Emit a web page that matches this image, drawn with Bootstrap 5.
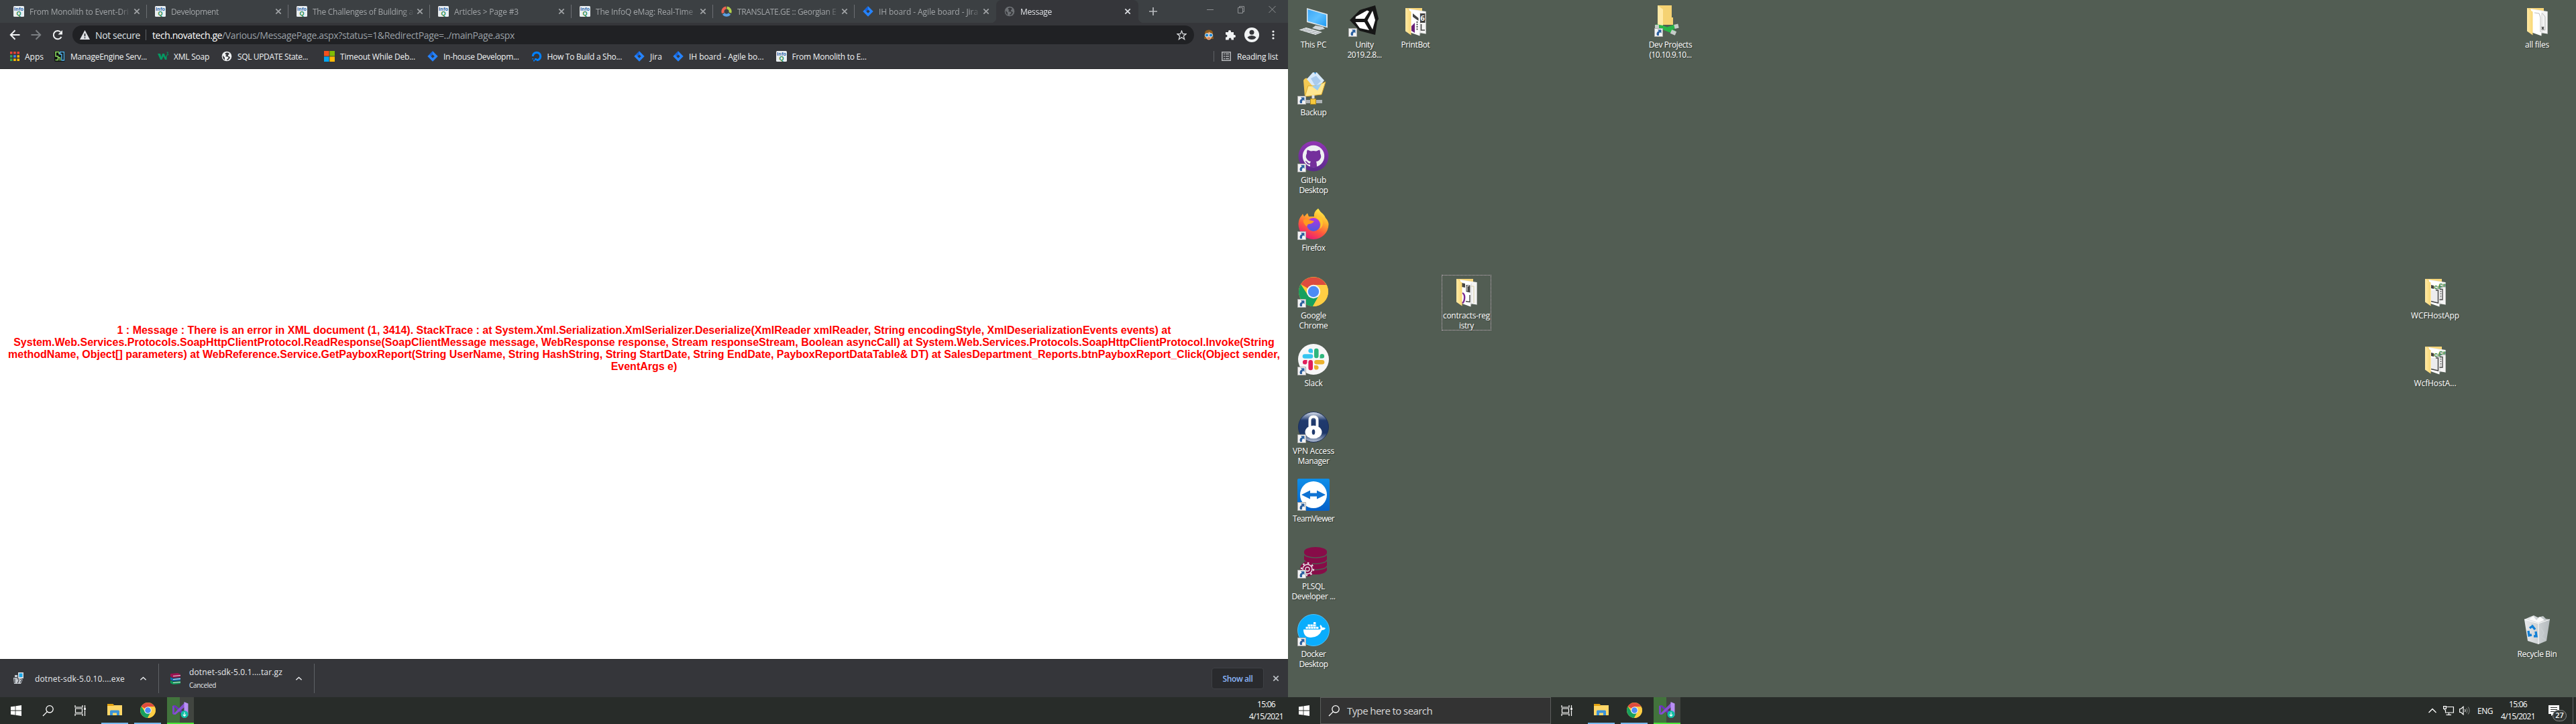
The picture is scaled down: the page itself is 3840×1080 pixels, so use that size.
<!DOCTYPE html>
<html lang="en">
<head>
<meta charset="utf-8">
<title>Message</title>
<link href="https://cdn.jsdelivr.net/npm/bootstrap@5.3.0/dist/css/bootstrap.min.css" rel="stylesheet">
<script src="https://cdn.jsdelivr.net/npm/bootstrap@5.3.0/dist/js/bootstrap.bundle.min.js"></script>
<style>
body{width:3840px;height:1080px;font-family:"Open Sans","Noto Sans",sans-serif;font-size:12px;font-weight:500;line-height:15px;background:#525d53;overflow:hidden}
svg{flex:none;display:block}
.fit{display:inline-block;white-space:pre}
.screen{width:1920px;height:1080px}
.vline{width:1px;background:#5f6266}

/* browser chrome */
.tabstrip{height:34px;background:#3c4043;padding-left:8px;color:#a1a4a7}
.tab-item{width:211px;height:34px;padding-left:12px;position:relative}
.tab-item .tab-title{width:150px;overflow:hidden;white-space:nowrap;margin-left:8px;-webkit-mask-image:linear-gradient(90deg,#000 134px,transparent 152px);mask-image:linear-gradient(90deg,#000 134px,transparent 152px)}
.tab-item.sep::after{content:"";position:absolute;right:0;top:7px;width:1px;height:20px;background:#6c6f73}
.tab-active{background:#35363a;border-radius:8px 8px 0 0;color:#dfe1e5;width:212px}
.tab-active::before,.tab-active::after{content:"";position:absolute;bottom:0;width:8px;height:8px}
.tab-active::before{left:-8px;background:radial-gradient(circle at 0 0,transparent 8px,#35363a 8.5px)}
.tab-active::after{right:-8px;background:radial-gradient(circle at 100% 0,transparent 8px,#35363a 8.5px)}
.newtab{margin-left:15px;height:34px}
.winctl{gap:36px;padding:8px 18px 0 0}
.toolbar{height:36px;background:#35363a;padding-left:13px;padding-top:4px}
.navbtns{gap:14px;height:28px}
.omni{width:1672px;height:28px;border-radius:14px;margin-left:13px;background:#202124;font-size:14px;font-weight:400;color:#9aa0a6;padding-left:11px}
.secure{color:#dfe1e5;margin-left:8px}
.pipe{height:16px;margin:0 9px 0 8px}
.star{margin-right:11px}
.exts{height:28px;margin-left:14px;gap:16px}
.exts svg:nth-child(3){margin-left:-3px}
.exts svg:nth-child(4){margin-left:3px}
.marks{height:33px;background:#35363a;border-bottom:1px solid #28292c;color:#f1f3f4;padding:0 0 4px 15px}
.bm{margin-left:8px;margin-right:18px}
.bm-16{margin-right:16px}
.bm-24{margin-right:24px}
.rsep{height:16px;margin-right:11px}
.rl{margin-left:9px;margin-right:15px}
.page{font:bold 16px/18px "Liberation Sans",Arial,sans-serif;color:#f00}
.err{margin-top:-46px}

/* download shelf */
.shelf{height:57px;background:#35363a;border-top:1px solid #28292c;color:#e8eaed}
.dl1{margin-left:20px}.n1{margin-left:16px}.ca1{margin-left:22px}
.shsep{height:44px;margin-left:17px}
.dl2{margin-left:16px}.n2{margin-left:13px;width:140px;line-height:19px}.cancel{font-size:10px}.ca2{margin-left:18px}
.showall{width:78px;height:32px;border:1px solid #3f4145;border-radius:4px;background:#292a2d;color:#8ab4f8;font-weight:600}
.shx{margin:0 12px;color:#bdc1c6}

/* taskbars */
.taskbar{height:40px;background:#282c29;color:#fff;padding-left:16px}
.task{width:40px;height:40px;margin-right:9px;border-bottom:2px solid #76b9ed}
.task-vs{background:linear-gradient(90deg,#42733c 19px,#414540 19px);border-bottom:2px solid #4ce53a}
.g1{margin-left:31px}.g2{margin-left:30px}.g3{margin-left:22px}
.clock{line-height:18px}.c-left{margin-right:7px}
.searchbox{width:344px;height:40px;background:#333;border:1px solid #5c5e5c;color:#d8d8d8;font-size:15px;font-weight:400;margin-left:16px;padding-left:11px;gap:10px}
.h1x{margin-left:15px}.h2x{margin-left:22px}
.tray{gap:8px}.tray>svg:first-child{margin-right:2px}
.eng{margin-left:2px}.tray .clock{margin:0 12px 0 4px}
.notice{position:relative;width:28px;height:40px}
.notice span{position:absolute;left:6px;top:19px;width:21px;height:17px;border:1px solid #8b8e8b;border-radius:9px;background:#333735;font-size:11px;font-weight:600;line-height:14px;text-align:center}
.edge{height:40px;margin-right:4px}

/* desktop icon grid */
.desk{height:1040px;background:#525d53;display:grid;grid-template-columns:repeat(25,76px);grid-template-rows:repeat(10,101px);color:#fff;text-align:center;text-shadow:1px 1px 1px #0006}
.shortcut{padding-top:7px;position:relative}
.shortcut svg{margin:0 auto 4px}
.shortcut.picked::after{content:"";position:absolute;left:1px;top:6px;width:74px;height:83px;border:1px dotted #c9b5c3}
.r0{grid-row:1}.r1{grid-row:2}.r2{grid-row:3}.r3{grid-row:4}.r4{grid-row:5}.r5{grid-row:6}.r6{grid-row:7}.r7{grid-row:8}.r8{grid-row:9}.r9{grid-row:10}
.c0{grid-column:1}.c1{grid-column:2}.c2{grid-column:3}.c3{grid-column:4}.c7{grid-column:8}.c22{grid-column:23}.c24{grid-column:25}
</style>
</head>
<body class="d-flex m-0">
<svg width="0" height="0" class="position-absolute">
<defs>
<linearGradient id="gFolder" x1="0" x2="1"><stop offset="0" stop-color="#ffe9a6"/><stop offset="1" stop-color="#f9d773"/></linearGradient>
<linearGradient id="gScreen" x1="0" y1="0" x2="1" y2="1"><stop offset="0" stop-color="#3aa5f5"/><stop offset=".5" stop-color="#5fc0ff"/><stop offset="1" stop-color="#1f9bf2"/></linearGradient>
<linearGradient id="gGit" x1="0" y1="0" x2="0" y2="1"><stop offset="0" stop-color="#9135b4"/><stop offset="1" stop-color="#5b2a8c"/></linearGradient>
<linearGradient id="gFox" x1=".8" y1="0" x2=".3" y2="1"><stop offset="0" stop-color="#fff44f"/><stop offset=".35" stop-color="#ffb02e"/><stop offset=".65" stop-color="#ff5a3c"/><stop offset="1" stop-color="#e6127d"/></linearGradient>
<linearGradient id="gGlobe" x1="0" y1="0" x2="0" y2="1"><stop offset="0" stop-color="#b833e1"/><stop offset="1" stop-color="#4a5ae0"/></linearGradient>
<linearGradient id="gTv" x1="0" y1="0" x2="0" y2="1"><stop offset="0" stop-color="#0e8ee9"/><stop offset="1" stop-color="#0560c8"/></linearGradient>
<linearGradient id="gVpn" x1="0" y1="0" x2="0" y2="1"><stop offset="0" stop-color="#dfe6f2"/><stop offset=".28" stop-color="#203a6e"/><stop offset=".7" stop-color="#1e3768"/><stop offset="1" stop-color="#b9c5da"/></linearGradient>
<linearGradient id="gBin" x1="0" x2="1"><stop offset="0" stop-color="#e9ebed"/><stop offset="1" stop-color="#b4babd"/></linearGradient>
<symbol id="infoq" viewBox="0 0 16 16"><rect width="16" height="16" rx="1.5" fill="#e9eef1"/><text x="8" y="6.8" font-family="Liberation Sans" font-weight="bold" font-size="7.2" text-anchor="middle" fill="#1d5fa8" textLength="14">Info</text><text x="8" y="14" font-family="Liberation Sans" font-weight="bold" font-size="9" text-anchor="middle" fill="#1f8a4c">Q</text></symbol>
<symbol id="jira" viewBox="0 0 16 16"><path d="M8 .3 15.7 8 8 15.7.3 8Z" fill="#2684ff"/><path d="M8 5.2 10.8 8 8 10.8 5.2 8Z" fill="#333c4c"/><path d="M8 .3V5.2L5.2 8 3 5.4Z" fill="#1563db"/></symbol>
<symbol id="translate" viewBox="0 0 16 16" fill="none" stroke-width="4"><path d="M7.5 2.4A5.7 5.7 0 0 0 3 10.5" stroke="#ee6352"/><path d="M8.5 2.4A5.7 5.7 0 0 1 13.3 10" stroke="#b2cf4c"/><path d="M3.5 11.5A5.7 5.7 0 0 0 12.6 11.5" stroke="#5c9fe0"/></symbol>
<symbol id="globe" viewBox="0 0 16 16"><circle cx="8" cy="8" r="7.3" fill="currentColor"/><path d="M8.5 2.5C5 2.500 5 5 7 5.500S5 7 6.500 8s4 0 4 2-2.500 1.500-2.500 4c3.500-.5 4.500-3 5-5l-2.500-1C9 7.500 10.500 5 12 4.500 11 3 10 2.500 8.500 2.500ZM2.300 6.500c1 3 3 2 2.700 4-.2 1.500 0 2 .5 3C3 12.500 1.500 9.500 2.300 6.500Z" fill="#35363a"/></symbol>
<symbol id="xmark" viewBox="0 0 12 12"><path d="M2.3 2.3 9.700 9.700M9.700 2.300 2.300 9.700" stroke="currentColor" stroke-width="1.7"/></symbol>
<symbol id="caret" viewBox="0 0 12 12"><path d="M1.500 8 6 3.700 10.500 8" stroke="currentColor" fill="none" stroke-width="1.6"/></symbol>
<symbol id="win" viewBox="0 0 16 16" fill="#fff"><path d="M0 2.300 6.600 1.400V7.600H0ZM7.400 1.300 16 0V7.600H7.400ZM0 8.400H6.600V14.600L0 13.700ZM7.400 8.400H16V16L7.400 14.700Z"/></symbol>
<symbol id="lens" viewBox="0 0 18 18" fill="none" stroke="#fff" stroke-width="1.3"><circle cx="11" cy="6.800" r="5.200"/><path d="M7.300 10.600 1 17"/></symbol>
<symbol id="tview" viewBox="0 0 18 18" fill="none" stroke="#fff" stroke-width="1.2"><path d="M1 1v3h11V1M1 17v-3h11v3M1.500 6h10v6h-10ZM15.500 1v4M15.500 8.500V17"/><path d="M14.200 5h2.600v3h-2.600z" fill="#fff" stroke="none"/></symbol>
<symbol id="explorer" viewBox="0 0 22 20"><path d="M0 1H8L10 3H22V18H0Z" fill="#ffd768"/><path d="M0 1H8L10 3V4H0Z" fill="#e2a210"/><path d="M4 18V12Q4 10.500 5.500 10.500H16.500Q18 10.500 18 12V18H14V14.500H8V18Z" fill="#3b93d9"/></symbol>
<symbol id="chrome" viewBox="0 0 48 48"><circle cx="24" cy="24" r="22" fill="#fc3"/><path d="M24 24 5 13A22 22 0 0 1 43.200 14H24Z" fill="#dd4b3e"/><path d="M5 13A22 22 0 0 0 23 46L32.500 29.500 24 24 15.500 29Z" fill="#17a05e"/><path d="M24 14H43.500A22 22 0 0 1 23 46L33 28Z" fill="#ffce44"/><circle cx="24" cy="24" r="10.200" fill="#f5f5f5"/><circle cx="24" cy="24" r="8.200" fill="#4c8bf5"/></symbol>
<symbol id="vs" viewBox="0 0 24 24"><path d="M0 6 3 5V19L0 18Z" fill="#7a45c8"/><path d="M1 5.500 4.500 5 18.500 16.500V23Z" fill="#6a35b5"/><path d="M1 18.500 4.500 19 18.500 7.500V1Z" fill="#8650d0"/><path d="M17.500 0 23.500 2.500V20.500L17.500 23Z" fill="#b98ff4"/><circle cx="18" cy="18.500" r="5.500" fill="#12bfa6"/><path d="M18 15.500V21M15.800 19 18 21.200 20.200 19" stroke="#fff" fill="none" stroke-width="1.1"/></symbol>
<symbol id="link" viewBox="0 0 13 13"><path d="M.5.5h12v12H.5z" fill="#f3f3f3" stroke="#a9a9a9"/><path d="M5 2.200H10.500V7.700L8.800 6.100C6.800 7.400 6.500 9 7.200 11H4.200C2.700 8 4 5.300 6.800 4.200Z" fill="#2b5f9e"/></symbol>
<symbol id="folderdoc" viewBox="0 0 48 48"><path d="M9 5H34V40H17Z" fill="#f6d579"/><path d="M14 6 36 9.500 39.500 10V43.500L30 42Z" fill="#f3f3f3"/><path d="M15 7 30.500 10V46.500L15 41Z" fill="#fff"/><path d="M31 12V44M39.500 10V43.500" stroke="#c8c8c8" stroke-width=".7"/></symbol>
<symbol id="folderfront" viewBox="0 0 48 48"><path d="M9 5 17.500 10.500V45.500L9 39.500Z" fill="url(#gFolder)"/></symbol>
<symbol id="codedocs" viewBox="0 0 48 48"><use href="#folderdoc"/><path d="M18 22V39L28.500 42V21" fill="#ececee"/><path d="M18 14 22 15V20L18 19Z" fill="#444"/><path d="M18 38.500 28.500 41V22H25" fill="none" stroke="#444" stroke-width="1.5"/><path d="M31 20.500H35V36H30.500" fill="none" stroke="#444" stroke-width="1.300"/><path d="M32.500 23V34" stroke="#555" stroke-width="1.500" stroke-dasharray="1.500 2"/><text x="22" y="19.500" font-family="Liberation Sans" font-size="8" font-weight="bold" fill="#2b8a30">C#</text><text x="29.500" y="17" font-family="Liberation Sans" font-size="8" font-weight="bold" fill="#2b8a30">C#</text><use href="#folderfront"/></symbol>
</defs>
</svg>

<!-- Left monitor: browser window -->
<div class="screen d-flex flex-column">
  <div class="tabstrip d-flex">
    <div class="tab-item sep d-flex align-items-center"><svg width="16" height="16"><use href="#infoq"/></svg><div class="tab-title"><span class="fit" data-w="147.5">From Monolith to Event-Dri</span></div><svg width="12" height="12" class="ms-1"><use href="#xmark"/></svg></div>
    <div class="tab-item sep d-flex align-items-center"><svg width="16" height="16"><use href="#infoq"/></svg><div class="tab-title"><span class="fit" data-w="71">Development</span></div><svg width="12" height="12" class="ms-1"><use href="#xmark"/></svg></div>
    <div class="tab-item sep d-flex align-items-center"><svg width="16" height="16"><use href="#infoq"/></svg><div class="tab-title"><span class="fit" data-w="150">The Challenges of Building a</span></div><svg width="12" height="12" class="ms-1"><use href="#xmark"/></svg></div>
    <div class="tab-item sep d-flex align-items-center"><svg width="16" height="16"><use href="#infoq"/></svg><div class="tab-title"><span class="fit" data-w="96">Articles &gt; Page #3</span></div><svg width="12" height="12" class="ms-1"><use href="#xmark"/></svg></div>
    <div class="tab-item sep d-flex align-items-center"><svg width="16" height="16"><use href="#infoq"/></svg><div class="tab-title"><span class="fit" data-w="145">The InfoQ eMag: Real-Time</span></div><svg width="12" height="12" class="ms-1"><use href="#xmark"/></svg></div>
    <div class="tab-item sep d-flex align-items-center"><svg width="16" height="16"><use href="#translate"/></svg><div class="tab-title"><span class="fit" data-w="147.5">TRANSLATE.GE :: Georgian E</span></div><svg width="12" height="12" class="ms-1"><use href="#xmark"/></svg></div>
    <div class="tab-item d-flex align-items-center"><svg width="16" height="16"><use href="#jira"/></svg><div class="tab-title"><span class="fit" data-w="148">IH board - Agile board - Jira</span></div><svg width="12" height="12" class="ms-1"><use href="#xmark"/></svg></div>
    <div class="tab-item tab-active d-flex align-items-center"><svg width="16" height="16" color="#6d7074"><use href="#globe"/></svg><div class="tab-title"><span class="fit" data-w="47">Message</span></div><svg width="12" height="12" class="ms-1"><use href="#xmark"/></svg></div>
    <div class="newtab d-flex align-items-center"><svg width="14" height="14" viewBox="0 0 14 14"><path d="M7 1V13M1 7H13" stroke="#b9bcc0" stroke-width="1.7"/></svg></div>
    <div class="winctl d-flex align-items-start ms-auto">
      <svg width="10" height="12" viewBox="0 0 10 12"><path d="M0 6.500H10" stroke="#8f9295"/></svg>
      <svg width="10" height="12" viewBox="0 0 10 12" fill="none" stroke="#8f9295"><path d="M.5 3.500h7v8h-7zM2.500 3.500v-2h7v8h-2"/></svg>
      <svg width="11" height="12" viewBox="0 0 11 12"><path d="M.5 1 10.500 11M10.500 1 .5 11" stroke="#8f9295"/></svg>
    </div>
  </div>
  <div class="toolbar d-flex align-items-start">
    <div class="navbtns d-flex align-items-center">
      <svg width="18" height="18" viewBox="0 0 18 18" fill="none" stroke="#f1f3f4" stroke-width="2"><path d="M16.500 9H3M9.500 2.300 2.800 9 9.500 15.700"/></svg>
      <svg width="18" height="18" viewBox="0 0 18 18" fill="none" stroke="#7b7e82" stroke-width="2"><path d="M1.500 9H15M8.500 2.300 15.200 9 8.500 15.700"/></svg>
      <svg width="18" height="18" viewBox="0 0 18 18"><path d="M14.500 12A6.200 6.200 0 1 1 13.200 4.600" fill="none" stroke="#f1f3f4" stroke-width="2"/><path d="M16 2V8.500H9.500Z" fill="#f1f3f4"/></svg>
    </div>
    <div class="omni d-flex align-items-center">
      <svg width="15" height="14" viewBox="0 0 15 14"><path d="M7.500 0 15 14H0Z" fill="#dfe1e5"/><path d="M7.500 5V9.300M7.500 10.500V12.300" stroke="#202124" stroke-width="1.6"/></svg>
      <span class="fit secure" data-w="67">Not secure</span><span class="vline pipe"></span>
      <span class="fit text-white" data-w="104">tech.novatech.ge</span><span class="fit" data-w="436">/Various/MessagePage.aspx?status=1&amp;RedirectPage=../mainPage.aspx</span>
      <svg class="ms-auto star" width="15" height="15" viewBox="0 0 16 16"><path d="M8 1.200 9.900 6H15L11 9.200 12.400 14.500 8 11.500 3.600 14.500 5 9.200 1 6H6.100Z" fill="none" stroke="#d6d8db" stroke-width="1.4"/></svg>
    </div>
    <div class="exts d-flex align-items-center">
      <svg width="16" height="16" viewBox="0 0 16 16"><path d="M2 7Q1 1 8 0.500 15 1 14 7L15 14H1Z" fill="#8f5c1e"/><path d="M3.500 6Q6 6 9 3.500 10 6 12.500 6V11Q11 15.500 8 15.500 5 15.500 3.500 11Z" fill="#eeb080"/><circle cx="5" cy="8.500" r="2.600" fill="#1d84d0" stroke="#d8ecfa"/><circle cx="11" cy="8.500" r="2.600" fill="#1d84d0" stroke="#d8ecfa"/><path d="M6 13h4" stroke="#b0543a"/></svg>
      <svg width="16" height="16" viewBox="0 0 16 16"><path d="M1 4H5V3A2 2 0 0 1 9 3V4H13V8H14A2 2 0 0 1 14 12H13V15.500H9.500V14.500A1.900 1.900 0 0 0 5.700 14.500V15.500H1V11.500H2A1.900 1.900 0 0 0 2 7.800H1Z" fill="#f1f3f4"/></svg>
      <svg width="22" height="22" viewBox="0 0 22 22"><circle cx="11" cy="11" r="11" fill="#f1f3f4"/><circle cx="11" cy="7.200" r="3.500" fill="#35363a"/><path d="M4.500 14.500Q7 12 11 12T17.500 14.500Q15.500 18 11 18T4.500 14.500Z" fill="#35363a"/></svg>
      <svg width="4" height="14" viewBox="0 0 4 14" fill="#f1f3f4"><circle cx="2" cy="2" r="1.600"/><circle cx="2" cy="7" r="1.600"/><circle cx="2" cy="12" r="1.600"/></svg>
    </div>
  </div>
  <div class="marks d-flex align-items-center">
    <svg width="14" height="14" viewBox="0 0 14 14"><path d="M0 0h3.500v3.500H0zM5.200 0h3.500v3.500H5.200zM10.500 0H14v3.500h-3.500z" fill="#ea4335"/><path d="M0 5.200h3.500v3.500H0zM0 10.500h3.500V14H0z" fill="#34a853"/><path d="M5.200 5.200h3.500v3.500H5.200z" fill="#4285f4"/><path d="M10.500 5.200H14v3.500h-3.500zM5.200 10.500h3.500V14H5.200zM10.500 10.500H14V14h-3.500z" fill="#fbbc05"/></svg>
    <span class="fit bm bm-16" data-w="28">Apps</span>
    <svg width="16" height="16" viewBox="0 0 16 16"><rect width="16" height="16" rx="2" fill="#101312"/><path d="M7 1.500H2V8H5.500V13.500H1.500M8.500 14.500V10H5M7 1.500V5" fill="none" stroke="#8ee05f" stroke-width="1.5"/><path d="M8.500 1.500H14.500V14H11V5H8.500Z" fill="none" stroke="#56b4ea" stroke-width="1.5"/></svg>
    <span class="fit bm bm-16" data-w="114">ManageEngine Serv...</span>
    <svg width="16" height="16" viewBox="0 0 16 16"><path d="M0 4H4L5.500 9 7 4H10L11.500 9 13.500 5 13.500 13H11L8.500 8 6.500 13H4Z" fill="#059862"/><path d="M13.500 2H15.500L14.500 4Q16 4 15.500 6H13.500" fill="none" stroke="#059862"/></svg>
    <span class="fit bm" data-w="53">XML Soap</span>
    <svg width="16" height="16" color="#f1f3f4"><use href="#globe"/></svg>
    <span class="fit bm bm-24" data-w="105">SQL UPDATE State...</span>
    <svg width="16" height="16" viewBox="0 0 16 16"><path d="M0 0h7.600v7.600H0z" fill="#f4511e"/><path d="M8.400 0H16v7.600H8.400z" fill="#81bc06"/><path d="M0 8.400h7.600V16H0z" fill="#05a6f0"/><path d="M8.400 8.400H16V16H8.400z" fill="#ffba08"/></svg>
    <span class="fit bm" data-w="112">Timeout While Deb...</span>
    <svg width="16" height="16"><use href="#jira"/></svg><span class="fit bm" data-w="112.5">In-house Developm...</span>
    <svg width="16" height="16" viewBox="0 0 16 16"><path d="M8 13.700A5.700 5.700 0 1 0 2.300 8" fill="none" stroke="#0080ff" stroke-width="3.2"/><path d="M5 11h3v3H5zM3 13.500h2v2H3zM1.500 11h1.600v1.600H1.500z" fill="#0080ff"/></svg><span class="fit bm" data-w="111.5">How To Build a Sho...</span>
    <svg width="16" height="16"><use href="#jira"/></svg><span class="fit bm bm-16" data-w="18">Jira</span>
    <svg width="16" height="16"><use href="#jira"/></svg><span class="fit bm" data-w="111.500">IH board - Agile bo...</span>
    <svg width="16" height="16"><use href="#infoq"/></svg><span class="fit bm" data-w="111">From Monolith to E...</span>
    <span class="vline rsep ms-auto"></span>
    <svg width="14" height="14" viewBox="0 0 14 14"><path d="M.8.800h12.400v12.400H.8z" fill="none" stroke="#b5b7ba" stroke-width="1.5"/><path d="M3 3.500h2M6 3.500h5M3 7h2M6 7h5M3 10.500h2M6 10.500h5" stroke="#b5b7ba" stroke-width="1.5"/></svg>
    <span class="fit rl" data-w="61">Reading list</span>
  </div>
  <main class="page flex-fill bg-white d-flex flex-column justify-content-center text-center">
    <div class="err">1 : Message : There is an error in XML document (1, 3414). StackTrace : at System.Xml.Serialization.XmlSerializer.Deserialize(XmlReader xmlReader, String encodingStyle, XmlDeserializationEvents events) at<br>System.Web.Services.Protocols.SoapHttpClientProtocol.ReadResponse(SoapClientMessage message, WebResponse response, Stream responseStream, Boolean asyncCall) at System.Web.Services.Protocols.SoapHttpClientProtocol.Invoke(String<br>methodName, Object[] parameters) at WebReference.Service.GetPayboxReport(String UserName, String HashString, String StartDate, String EndDate, PayboxReportDataTable&amp; DT) at SalesDepartment_Reports.btnPayboxReport_Click(Object sender,<br>EventArgs e)</div>
  </main>
  <div class="shelf d-flex align-items-center">
    <svg class="dl1" width="16" height="18" viewBox="0 0 16 18"><path d="M7 0h8v9H7z" fill="#d9dde3"/><path d="M8.500 1.500h5V7h-5z" fill="#19a7e8"/><path d="M2 4h4v3H2zM0 8h10l4 3-3 6H1Z" fill="#c9cdd2"/><path d="M2 9v7M5 10q3-2 3 1t-2 5M10 10l3 2-3 3" stroke="#4a4e55" fill="none" stroke-width="1.3"/></svg>
    <span class="fit n1" data-w="134">dotnet-sdk-5.0.10....exe</span>
    <svg class="ca1" width="11" height="11"><use href="#caret"/></svg>
    <span class="vline shsep"></span>
    <svg class="dl2" width="16" height="17" viewBox="0 0 16 17"><path d="M1 1 12 0 16 2V6L5 7 1 5Z" fill="#9c1150"/><path d="M1 6 5 8 16 7V11L5 12 1 10Z" fill="#1569b0"/><path d="M1 11 5 13 16 12V16L5 17 1 15Z" fill="#0d9a59"/><path d="M5 4.500 16 3.500M5 9.500 16 8.500M5 14.500 16 13.500" stroke="#e7e9ea"/></svg>
    <div class="n2"><span class="fit d-block" data-w="139">dotnet-sdk-5.0.1....tar.gz</span><span class="fit cancel" data-w="40">Canceled</span></div>
    <svg class="ca2" width="11" height="11"><use href="#caret"/></svg>
    <span class="vline shsep"></span>
    <div class="showall ms-auto d-flex align-items-center justify-content-center"><span class="fit" data-w="45">Show all</span></div>
    <svg class="shx" width="12" height="12"><use href="#xmark"/></svg>
  </div>
  <div class="taskbar d-flex align-items-center">
    <svg width="16" height="16"><use href="#win"/></svg>
    <svg width="18" height="18" class="g1"><use href="#lens"/></svg>
    <svg width="18" height="18" class="g2"><use href="#tview"/></svg>
    <div class="task d-flex align-items-center justify-content-center g3"><svg width="22" height="20"><use href="#explorer"/></svg></div>
    <div class="task d-flex align-items-center justify-content-center"><svg width="25" height="25"><use href="#chrome"/></svg></div>
    <div class="task task-vs d-flex align-items-center justify-content-center"><svg width="24" height="24"><use href="#vs"/></svg></div>
    <div class="ms-auto text-center clock c-left"><span class="fit" data-w="27">15:06</span><br><span class="fit" data-w="51">4/15/2021</span></div>
  </div>
</div>

<!-- Right monitor: desktop -->
<div class="screen d-flex flex-column">
  <div class="desk">
    <div class="shortcut r0 c0"><svg width="48" height="48" viewBox="0 0 48 48"><path d="M14 5 45 14V34.500L14 26Z" fill="#dfe6ea"/><path d="M15.500 7 43 15V32.500L15.500 24.500Z" fill="url(#gScreen)"/><path d="M27 31 38 33 41 36 33 38 22 35Z" fill="#cfd6da"/><path d="M2.500 37.500 13 34 37 41 27 45Z" fill="#e8ecee"/><path d="M7 38.500 16 36M12 40 22 37.500M18 42 28 39.500M24 43.500 33 41M6 36.500 30 43.500M10 35.500 34 42" stroke="#9da4a8" stroke-width=".7"/></svg><span class="fit" data-w="38.5">This PC</span></div>
    <div class="shortcut r0 c1"><svg width="48" height="48" viewBox="0 0 48 48"><path d="M2 23 17 8 40 1 45 21 43 25 40 45 17 39Z" fill="#161616"/><path d="M11 18 28 8.500 31 10 24 21H10.500ZM10.500 26H24L31 38 17 35ZM36 9 40 23 36 37 28.500 23.500Z" fill="#fff"/><use href="#link" x="0" y="35" width="13" height="13"/></svg><span class="fit" data-w="27">Unity</span><br><span class="fit" data-w="51">2019.2.8...</span></div>
    <div class="shortcut r0 c2"><svg width="48" height="48" viewBox="0 0 48 48"><use href="#folderdoc"/><path d="M31 13H38.500V27H31Z" fill="#444"/><path d="M32.500 29V38H38" fill="none" stroke="#444" stroke-width="1.600"/><path d="M20 13 28.500 20V24L24 21 20 18Z" fill="#444"/><path d="M26.500 25V38" stroke="#444" stroke-width="2" stroke-dasharray="2 1.500"/><text x="31.500" y="24" font-size="11" fill="#fff" font-weight="bold">6</text><path d="M18 32 23 27V42L18 39Z" fill="#68217a"/><use href="#folderfront"/></svg><span class="fit" data-w="43">PrintBot</span></div>
    <div class="shortcut r0 c7"><svg width="48" height="48" viewBox="0 0 48 48"><path d="M5 1H26V19H28V30H10Z" fill="#f5d273"/><path d="M5 1 13 7V33L5 30Z" fill="#ffe9a6"/><path d="M2 32 12 34 20 37 30 41M18 37 32 32" stroke="#2ab548" stroke-width="6" fill="none"/><path d="M1 33H7M30 33 36 31.500M25 40 32 43" stroke="#c5cbc8" stroke-width="6"/><use href="#link" x="0" y="35" width="13" height="13"/></svg><span class="fit" data-w="64.5">Dev Projects</span><br><span class="fit" data-w="63">(10.10.9.10...</span></div>
    <div class="shortcut r0 c24"><svg width="48" height="48" viewBox="0 0 48 48"><use href="#folderdoc"/><path d="M32 13 36 18V38H31M20 12 27 13 29 19V41" fill="none" stroke="#bbb"/><path d="M31 33l3 4m0-4-3 4" stroke="#444" stroke-width="1.3"/><use href="#folderfront"/></svg><span class="fit" data-w="36">all files</span></div>
    <div class="shortcut r1 c0"><svg width="48" height="48" viewBox="0 0 48 48"><path d="M9 12Q12 6 17 10L24 14 40 16 36 33 11 36Z" fill="#f4c953"/><path d="M14 10 23 0H29L40 12 28 27Z" fill="#d7e9fa"/><path d="M20 9 28 5 35 13 27 21Z" fill="#a9cbee"/><path d="M25 0H28L26.500 3Z" fill="#2d8ee0"/><path d="M11 36 16 20 30 20 42 14 36 33Z" fill="#ffe68f" stroke="#d9a92e"/><path d="M22 21 36 17 30 27Z" fill="#9cccf0"/><path d="M23.500 34V43" stroke="#ddd" stroke-width="4"/><path d="M11 43.500H37" stroke="#aeb3b5" stroke-width="5"/><path d="M19.500 39.500h8v8h-8z" fill="#f7c93c" stroke="#b1881c"/><use href="#link" x="0" y="35" width="13" height="13"/></svg><span class="fit" data-w="39">Backup</span></div>
    <div class="shortcut r2 c0"><svg width="48" height="48" viewBox="0 0 48 48"><circle cx="24" cy="24" r="22.500" fill="url(#gGit)"/><circle cx="24" cy="24" r="16.200" fill="#eef0f2"/><path d="M15 14.500 20 16.500Q24 15.500 28 16.500L33 14.500Q34.500 17 34 20 37 25 33 29.500 31 31.500 28 32 29 34 29 40.500H19V36.500Q15 37 13.500 34 12.500 32 11.500 31 14 30.500 15.500 33.500 17 35.500 19 34.500 19 33 20 32 17 31.500 15 29.500 11 25 14 20 13.500 17 15 14.500Z" fill="#74309c"/><use href="#link" x="0" y="35" width="13" height="13"/></svg><span class="fit" data-w="38">GitHub</span><br><span class="fit" data-w="43">Desktop</span></div>
    <div class="shortcut r3 c0"><svg width="48" height="48" viewBox="0 0 48 48"><path d="M24 47A22.500 22.500 0 0 1 1.500 24Q2 16 6 12L8 9 10 13 15 8 17 13 25 13Q24 6 31 1 34 6 38 9 41 12 42 15 46.500 20 46.500 25A22.500 22.500 0 0 1 24 47Z" fill="url(#gFox)"/><circle cx="24" cy="25" r="10" fill="url(#gGlobe)"/><path d="M9 18Q14 15 17 18L25 20Q22 24 18 24 15 24 14 28 8 23 9 18Z" fill="#ff9a1f"/><path d="M28 15Q38 20 33 32 40 27 37 17Q34 12 30 12Z" fill="#ffc62e"/><use href="#link" x="0" y="35" width="13" height="13"/></svg><span class="fit" data-w="35">Firefox</span></div>
    <div class="shortcut r4 c0"><svg width="48" height="48" viewBox="0 0 48 48"><use href="#chrome"/><use href="#link" x="0" y="35" width="13" height="13"/></svg><span class="fit" data-w="38">Google</span><br><span class="fit" data-w="43">Chrome</span></div>
    <div class="shortcut picked r4 c3"><svg width="48" height="48" viewBox="0 0 48 48"><use href="#folderdoc"/><path d="M17 11 22 12V18L17 17ZM23.500 14 29.500 14.500V25.500L23.500 24Z" fill="#444"/><path d="M25 23V15.500H28" stroke="#eee" fill="none"/><path d="M23 38.500 29 39.500V29" fill="none" stroke="#444" stroke-width="1.4"/><path d="M18 26Q22 28 21 35T17 40" stroke="#7b2a90" stroke-width="2.4" fill="none"/><path d="M31 16H35V41" stroke="#d8cfa8" fill="none"/><use href="#folderfront"/></svg><span class="fit" data-w="70">contracts-reg</span><br><span class="fit" data-w="22">istry</span></div>
    <div class="shortcut r4 c22"><svg width="48" height="48"><use href="#codedocs"/></svg><span class="fit" data-w="72">WCFHostApp</span></div>
    <div class="shortcut r5 c0"><svg width="48" height="48" viewBox="0 0 48 48"><circle cx="24" cy="24" r="23" fill="#f7f7f8"/><g stroke-width="6.6" stroke-linecap="round"><path d="M11 19.500H20" stroke="#36c5f0"/><path d="M28.300 11V19" stroke="#2eb67d"/><path d="M28.500 28.300H37" stroke="#ecb22e"/><path d="M19.700 28.300V37" stroke="#e01e5a"/></g><path d="M23 14.500V11A3.300 3.300 0 1 0 19.700 14.500Z" fill="#36c5f0"/><path d="M33.500 22.500H37A3.300 3.300 0 1 0 33.500 19Z" fill="#2eb67d"/><path d="M25 33V36.500A3.300 3.300 0 1 0 28.500 33Z" fill="#ecb22e"/><path d="M14.500 25H11A3.300 3.300 0 1 0 14.500 28.500Z" fill="#e01e5a"/><use href="#link" x="0" y="35" width="13" height="13"/></svg><span class="fit" data-w="27">Slack</span></div>
    <div class="shortcut r5 c22"><svg width="48" height="48"><use href="#codedocs"/></svg><span class="fit" data-w="63">WcfHostA...</span></div>
    <div class="shortcut r6 c0"><svg width="48" height="48" viewBox="0 0 48 48"><circle cx="24" cy="24" r="22.500" fill="url(#gVpn)" stroke="#1b2f5c"/><path d="M18.500 25V14Q18.500 8.500 24 8.500T29.500 14V25" fill="none" stroke="#fff" stroke-width="4"/><ellipse cx="24" cy="31.500" rx="12.500" ry="9.800" fill="#fff"/><ellipse cx="24" cy="31.500" rx="2.300" ry="4" fill="#203a6e"/><use href="#link" x="0" y="35" width="13" height="13"/></svg><span class="fit" data-w="62">VPN Access</span><br><span class="fit" data-w="47">Manager</span></div>
    <div class="shortcut r7 c0"><svg width="48" height="48" viewBox="0 0 48 48"><rect width="48" height="48" rx="2" fill="url(#gTv)"/><circle cx="24" cy="24" r="20" fill="#fff"/><path d="M6 24 19 17.500V21.500H29V17.500L42 24 29 30.500V26.500H19V30.500Z" fill="#0f73d3"/><use href="#link" x="0" y="35" width="13" height="13"/></svg><span class="fit" data-w="62">TeamViewer</span></div>
    <div class="shortcut r8 c0"><svg width="48" height="48" viewBox="0 0 48 48"><path d="M10 8A17 7 0 0 1 44 8V36Q40 42 27 42T10 36Z" fill="#870c48"/><path d="M10 11A17 6 0 0 0 44 11M10 20A17 6 0 0 0 44 20M10 29A17 6 0 0 0 44 29" fill="none" stroke="#525d53" stroke-width="1.5"/><circle cx="15" cy="34" r="11" fill="#870c48"/><circle cx="15" cy="34" r="9" fill="none" stroke="#e4dce4" stroke-width="2.5" stroke-dasharray="2.5 4.5"/><circle cx="15" cy="34" r="7" fill="none" stroke="#e4dce4" stroke-width="1.6"/><circle cx="15" cy="34" r="3" fill="none" stroke="#e4dce4" stroke-width="1.3"/><use href="#link" x="0" y="35" width="13" height="13"/></svg><span class="fit" data-w="34">PLSQL</span><br><span class="fit" data-w="65">Developer ...</span></div>
    <div class="shortcut r9 c0"><svg width="48" height="48" viewBox="0 0 48 48"><circle cx="24" cy="24" r="23.500" fill="#0aadfc" stroke="#4fc1f7"/><path d="M9 23H33Q35 22.500 34.500 20.500 32.500 18 34.500 16 37 18 37 20 39.500 19.500 42 21 40.500 24 36.500 24 32 35 20 35 9 35 9 23Z" fill="#fff"/><path d="M12.500 20.500H32M15.500 17H28M24 13.500H28" stroke="#fff" stroke-width="3" stroke-dasharray="3.3 .6"/><use href="#link" x="0" y="35" width="13" height="13"/></svg><span class="fit" data-w="37">Docker</span><br><span class="fit" data-w="43">Desktop</span></div>
    <div class="shortcut r9 c24"><svg width="48" height="48" viewBox="0 0 48 48"><path d="M5 8 14 4 19 2 25 5 33 3 37 7 43 8 38 40 26 45 10 40Z" fill="url(#gBin)"/><path d="M5 8 26 14 43 8M26 14V45" stroke="#fff" fill="none"/><path d="M12 8 18 3 23 9 28 4 35 9 26 13Z" fill="#fafafa"/><path d="M29 20 34 28 30 34 36 38M15 15 20 18" stroke="#c9ced1" fill="none" stroke-width="1.5"/><path d="M13 21 17 18 21 23M11 25 12 32 16 31M19 33H23L22 26" fill="none" stroke="#1280d6" stroke-width="3.4"/></svg><span class="fit" data-w="59">Recycle Bin</span></div>
  </div>
  <div class="taskbar d-flex align-items-center">
    <svg width="16" height="16"><use href="#win"/></svg>
    <div class="searchbox d-flex align-items-center"><svg width="18" height="18"><use href="#lens"/></svg><span class="fit" data-w="127">Type here to search</span></div>
    <svg width="18" height="18" class="h1x"><use href="#tview"/></svg>
    <div class="task d-flex align-items-center justify-content-center h2x"><svg width="22" height="20"><use href="#explorer"/></svg></div>
    <div class="task d-flex align-items-center justify-content-center"><svg width="25" height="25"><use href="#chrome"/></svg></div>
    <div class="task task-vs d-flex align-items-center justify-content-center"><svg width="24" height="24"><use href="#vs"/></svg></div>
    <div class="tray ms-auto d-flex align-items-center">
      <svg width="12" height="12" viewBox="0 0 12 12"><path d="M.5 9 6 3.500 11.500 9" fill="none" stroke="#fff" stroke-width="1.3"/></svg>
      <svg width="16" height="14" viewBox="0 0 16 14" fill="none" stroke="#fff" stroke-width="1.2"><path d="M5 1.500H15.400V10H3.500V6M8.500 10V13M4.500 13.400H12"/><path d="M.6.600H4.400V4.400H.6ZM2.500 4.500V6.500"/></svg>
      <svg width="17" height="14" viewBox="0 0 17 14" fill="none" stroke="#fff"><path d="M.6 4.500H2.500L6 1.200V12.800L2.500 9.500H.6Z" stroke-width="1.2"/><path d="M8.500 5Q9.800 7 8.500 9"/><path d="M10.800 3.300Q13.300 7 10.800 10.700M13.200 1.500Q17 7 13.200 12.500" stroke="#8b8f8b"/></svg>
      <span class="fit eng" data-w="23">ENG</span>
      <div class="text-center clock"><span class="fit" data-w="27">15:06</span><br><span class="fit" data-w="51">4/15/2021</span></div>
      <div class="notice"><svg width="17" height="40" viewBox="0 0 17 40"><path d="M0 12H16V25H8L4 28V25H0Z" fill="#fff"/><path d="M3 15.500H13M3 18.500H13M3 21.500H10" stroke="#282c29" stroke-width="1.2"/></svg><span>27</span></div>
      <span class="vline edge"></span>
    </div>
  </div>
</div>
<script>
// Tighten or loosen each label so that it fills its nominal width.
document.querySelectorAll('.fit').forEach(function(el){
  var w=parseFloat(el.dataset.w);
  if(el.classList.contains('d-block')) el.style.width='max-content';
  var n=el.getBoundingClientRect().width;
  el.style.letterSpacing=((w-n)/el.textContent.length).toFixed(3)+'px';
});
</script>
</body>
</html>
